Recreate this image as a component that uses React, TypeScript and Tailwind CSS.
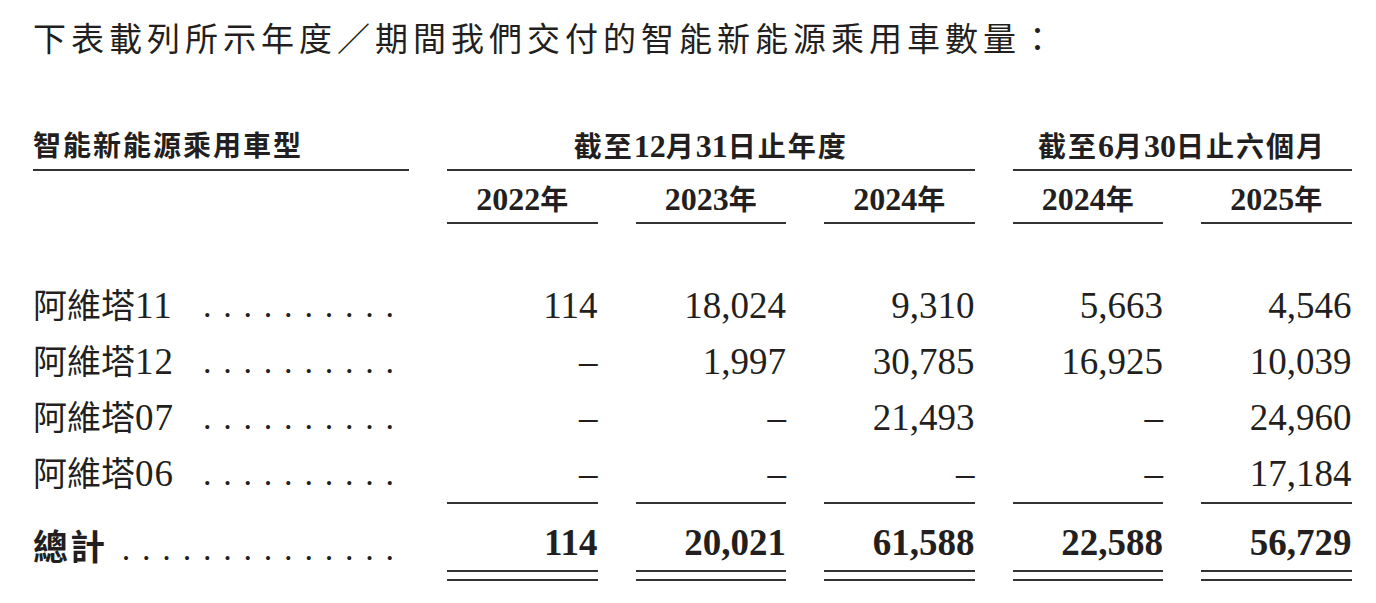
const rows = [
  { name: "阿維塔", code: "11", values: ["114", "18,024", "9,310", "5,663", "4,546"] },
  { name: "阿維塔", code: "12", values: ["–", "1,997", "30,785", "16,925", "10,039"] },
  { name: "阿維塔", code: "07", values: ["–", "–", "21,493", "–", "24,960"] },
  { name: "阿維塔", code: "06", values: ["–", "–", "–", "–", "17,184"] },
];

const totals = ["114", "20,021", "61,588", "22,588", "56,729"];
const years = ["2022", "2023", "2024", "2024", "2025"];

const font = { fontFamily: '"Liberation Serif", "Noto Sans CJK TC", serif' };

const Dots = ({ count }: { count: number }) => (
  <div className="flex pr-[9px] text-[34px]">
    {Array.from({ length: count }).map((_, i) => (
      <span key={i} className="w-[20.3px] text-center">
        .
      </span>
    ))}
  </div>
);

export default function App() {
  return (
    <div className="w-[1376px] h-[603px] bg-white text-[#231f20] pl-[33px] overflow-hidden" style={font}>
      {/* Intro */}
      <div className="pt-[20px] h-[60px] text-[33px] leading-[40px] tracking-[5px]">
        下表載列所示年度／期間我們交付的智能新能源乘用車數量：
      </div>

      <div className="grid grid-cols-[376px_repeat(5,150.5px)] gap-x-[38px]">
        {/* Group headers */}
        <div className="mt-[64px] h-[47px] border-b-2 border-[#333] text-[28px] font-bold leading-[45px] tracking-[2px]">
          智能新能源乘用車型
        </div>
        <div className="col-span-3 mt-[64px] h-[47px] border-b-2 border-[#333] text-center text-[28px] font-bold leading-[45px] tracking-[2px]">
          截至<span className="text-[32px] tracking-normal">12</span>月<span className="text-[32px] tracking-normal">31</span>日止年度
        </div>
        <div className="col-span-2 mt-[64px] h-[47px] border-b-2 border-[#333] text-center text-[28px] font-bold leading-[45px] tracking-[2px]">
          截至<span className="text-[32px] tracking-normal">6</span>月<span className="text-[32px] tracking-normal">30</span>日止六個月
        </div>

        {/* Years */}
        <div />
        {years.map((y, i) => (
          <div
            key={i}
            className="h-[53px] pt-[5px] border-b-2 border-[#333] text-center text-[32px] font-bold leading-[46px]"
          >
            {y}
            <span className="text-[28px]">年</span>
          </div>
        ))}

        {/* Spacer */}
        <div className="col-span-6 h-[54px]" />

        {/* Body rows */}
        {rows.map((r, ri) => {
          const last = ri === rows.length - 1;
          return [
            <div key={`l${ri}`} className="h-[56px] flex items-center justify-between leading-[56px]">
              <span className="text-[34px]">
                {r.name}
                <span className="text-[37px] tracking-[1px]">{r.code}</span>
              </span>
              <Dots count={10} />
            </div>,
            ...r.values.map((v, vi) => (
              <div
                key={`v${ri}-${vi}`}
                className={`text-right text-[37px] leading-[56px] ${last ? "h-[58px] border-b-2 border-[#333]" : "h-[56px]"}`}
              >
                {v}
              </div>
            )),
          ];
        })}

        {/* Total */}
        <div className="pt-[12px] flex items-center justify-between leading-[54px]">
          <span className="text-[35px] font-bold tracking-[2px]">總計</span>
          <Dots count={14} />
        </div>
        {totals.map((t, i) => (
          <div key={i} className="pt-[12px]">
            <div className="text-right text-[37px] font-bold leading-[54px]">{t}</div>
            <div className="h-[2px] bg-[#333]" />
            <div className="mt-[7px] h-[2px] bg-[#333]" />
          </div>
        ))}
      </div>
    </div>
  );
}
